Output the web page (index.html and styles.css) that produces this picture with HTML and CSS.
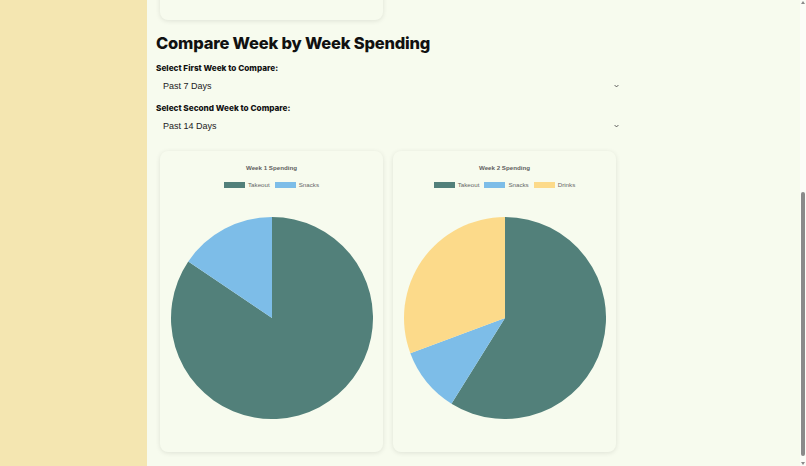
FILE: index.html
```html
<!DOCTYPE html>
<html lang="en">
<head>
    <meta charset="UTF-8">
    <meta name="viewport" content="width=device-width, initial-scale=1.0">
    <title>Spending Tracker</title>
    <link rel="stylesheet" href="styles.css">
</head>
<body>
    <aside class="sidebar"></aside>

    <main class="content" id="content">
        <section class="overview">
            <div class="card summary-card"></div>
        </section>

        <section class="compare">
            <h2>Compare Week by Week Spending</h2>

            <label for="week1">Select First Week to Compare:</label>
            <div class="select-wrap">
                <select id="week1">
                    <option>Past 7 Days</option>
                    <option>Past 14 Days</option>
                    <option>Past 21 Days</option>
                </select>
                <svg class="chevron" viewBox="0 0 8 5"><path d="M1 1l3 3 3-3" /></svg>
            </div>

            <label for="week2">Select Second Week to Compare:</label>
            <div class="select-wrap">
                <select id="week2">
                    <option>Past 7 Days</option>
                    <option selected>Past 14 Days</option>
                    <option>Past 21 Days</option>
                </select>
                <svg class="chevron" viewBox="0 0 8 5"><path d="M1 1l3 3 3-3" /></svg>
            </div>

            <div class="charts">
                <div class="card chart-card">
                    <div class="chart-title">Week 1 Spending</div>
                    <div class="legend">
                        <span class="legend-item"><i class="swatch takeout"></i>Takeout</span>
                        <span class="legend-item"><i class="swatch snacks"></i>Snacks</span>
                    </div>
                    <svg class="pie" viewBox="0 0 202 202">
                        <path class="takeout" d="M101 101L101 0A101 101 0 1 1 17.27 44.52Z" />
                        <path class="snacks" d="M101 101L17.27 44.52A101 101 0 0 1 101 0Z" />
                    </svg>
                </div>

                <div class="card chart-card">
                    <div class="chart-title">Week 2 Spending</div>
                    <div class="legend">
                        <span class="legend-item"><i class="swatch takeout"></i>Takeout</span>
                        <span class="legend-item"><i class="swatch snacks"></i>Snacks</span>
                        <span class="legend-item"><i class="swatch drinks"></i>Drinks</span>
                    </div>
                    <svg class="pie" viewBox="0 0 202 202">
                        <path class="takeout" d="M101 101L101 0A101 101 0 1 1 47.48 186.65Z" />
                        <path class="snacks" d="M101 101L47.48 186.65A101 101 0 0 1 6.33 136.21Z" />
                        <path class="drinks" d="M101 101L6.33 136.21A101 101 0 0 1 101 0Z" />
                    </svg>
                </div>
            </div>
        </section>
    </main>

    <!-- thin scrollbar drawn over the right edge -->
    <div class="scrollbar">
        <span class="scroll-arrow up"></span>
        <span class="scroll-thumb"></span>
        <span class="scroll-arrow down"></span>
    </div>

    <script>
        // Open the page scrolled down to the comparison section
        const content = document.getElementById('content');
        content.scrollTop = content.scrollHeight;
    </script>
</body>
</html>
```

FILE: styles.css
```css
body {
    margin: 0;
    height: 100vh;
    display: flex;
    overflow: hidden;
    font-family: Inter, "Liberation Sans", sans-serif;
    color: #111;
}

.sidebar {
    width: 147px;
    flex-shrink: 0;
    background-color: #f4e6b1;
}

.content {
    flex: 1;
    overflow-y: auto;
    background-color: #f7fbee;
    padding: 48px 0 14px 9px;
    box-sizing: border-box;
}

.content::-webkit-scrollbar {
    width: 6px;
}

.scrollbar {
    position: fixed;
    top: 0;
    right: 0;
    width: 6px;
    height: 100%;
    background-color: #fbfcf7;
}

.scroll-thumb {
    position: absolute;
    left: 1px;
    top: 192px;
    width: 4px;
    height: 264px;
    border-radius: 2px;
    background-color: #8a8a8a;
}

.scroll-arrow {
    position: absolute;
    left: 1px;
    width: 0;
    height: 0;
    border-left: 2px solid transparent;
    border-right: 2px solid transparent;
}

.scroll-arrow.up {
    top: 1px;
    border-bottom: 3px solid #8a8a8a;
}

.scroll-arrow.down {
    bottom: 1px;
    border-top: 3px solid #8a8a8a;
}

h2 {
    margin: 0;
    font-size: 16.5px;
    line-height: 22px;
    font-weight: 800;
    letter-spacing: -0.2px;
}

.card {
    background-color: #f7fbee;
    border-radius: 8px;
    box-shadow: 0 1px 5px rgba(0, 0, 0, 0.1);
}

.summary-card {
    width: 223px;
    height: 300px;
    margin-left: 4px;
}

.compare {
    width: 470px;
}

.compare h2 {
    margin: 12px 0 9px;
}

.compare label {
    display: block;
    font-size: 8.2px;
    line-height: 10px;
    font-weight: 800;
    margin-bottom: 2px;
}

.select-wrap {
    position: relative;
    margin-bottom: 7px;
}

.select-wrap select {
    display: block;
    width: 100%;
    height: 21px;
    padding: 0 7px;
    border: none;
    background: transparent;
    font-family: "Liberation Sans", Arial, sans-serif;
    font-size: 9px;
    color: #222;
    appearance: none;
    -webkit-appearance: none;
    outline: none;
}

.chevron {
    position: absolute;
    right: 7px;
    top: 9px;
    width: 5px;
    height: 4px;
    fill: none;
    stroke: #444;
    stroke-width: 1.4;
    pointer-events: none;
}

.charts {
    display: flex;
    gap: 10px;
    margin-top: 15px;
    padding-left: 4px;
}

.chart-card {
    width: 223px;
    padding: 12px 0 33px;
    display: flex;
    flex-direction: column;
    align-items: center;
}

.chart-title {
    font-family: "Liberation Sans", Arial, sans-serif;
    font-size: 6.2px;
    line-height: 10px;
    font-weight: 700;
    color: #5f5f5f;
}

.legend {
    display: flex;
    gap: 5px;
    margin-top: 7px;
    font-family: "Liberation Sans", Arial, sans-serif;
    font-size: 6.2px;
    line-height: 10px;
    color: #666;
}

.legend-item {
    display: flex;
    align-items: center;
    gap: 3px;
}

.swatch {
    width: 21px;
    height: 6px;
}

.swatch.takeout { background-color: #52807a; }
.swatch.snacks { background-color: #7dbde8; }
.swatch.drinks { background-color: #fcda8a; }

.pie {
    width: 202px;
    height: 202px;
    margin-top: 27px;
}

.pie .takeout { fill: #52807a; }
.pie .snacks { fill: #7dbde8; }
.pie .drinks { fill: #fcda8a; }
```
